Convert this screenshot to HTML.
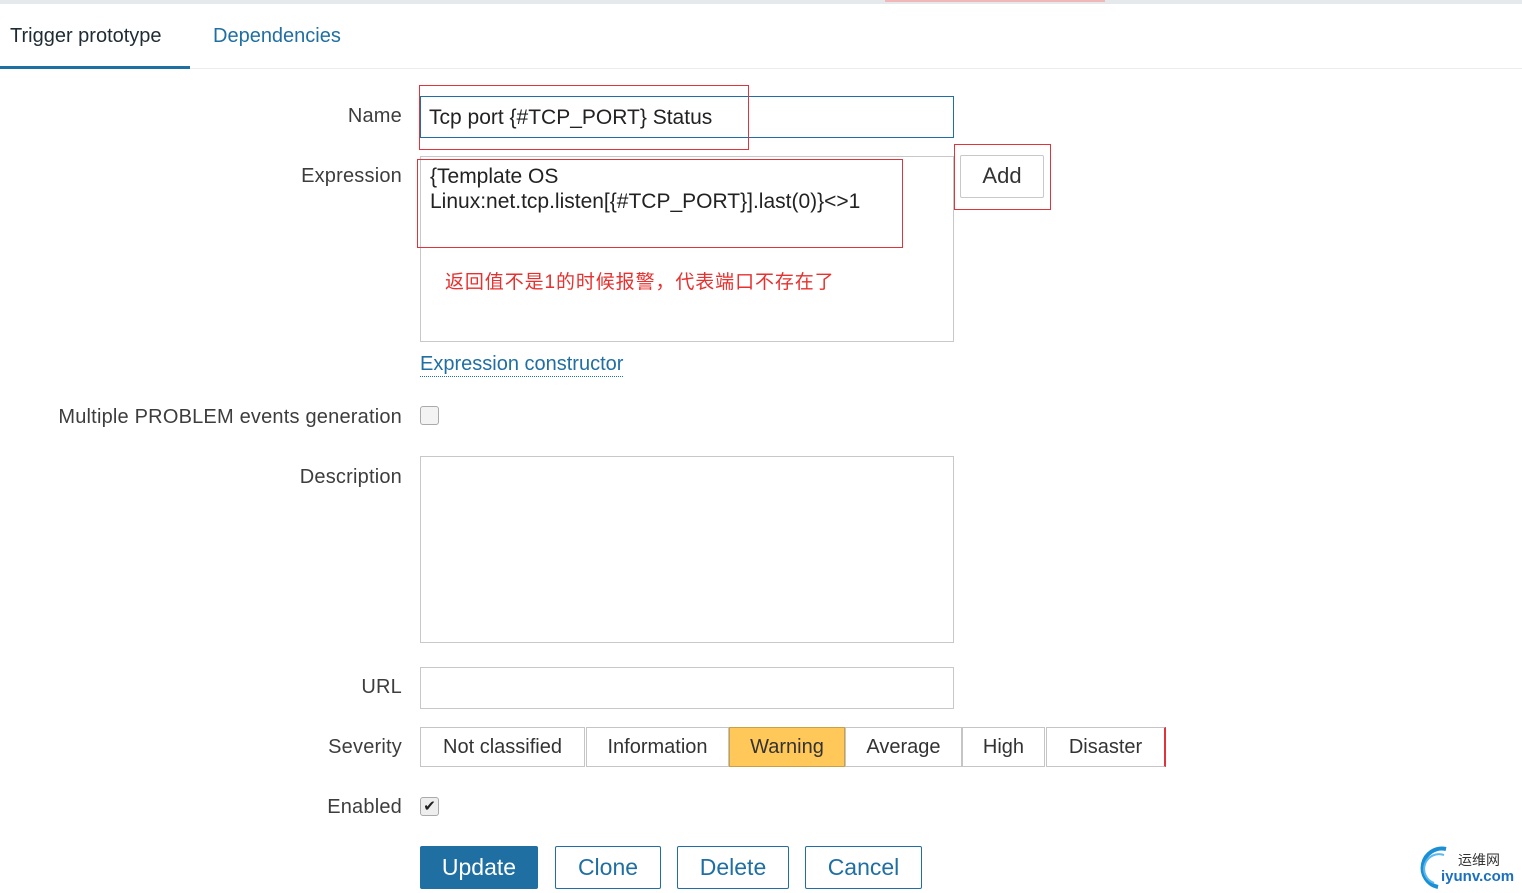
<!DOCTYPE html>
<html><head><meta charset="utf-8"><style>
body{margin:0;width:1522px;height:893px;background:#fff;position:relative;overflow:hidden;font-family:"Liberation Sans","Noto Sans CJK SC",sans-serif;color:#1f2c33;}
.a{position:absolute;}
.lbl{position:absolute;right:1120px;font-size:20px;color:#3d3d3d;white-space:nowrap;letter-spacing:0.2px}
.box{position:absolute;border:1px solid #c8c8c8;background:#fff;box-sizing:border-box;}
.red{position:absolute;border:1.5px solid #e0333a;box-sizing:border-box;}
.sev{position:absolute;top:727px;height:40px;border:1px solid #c5c5c5;box-sizing:border-box;font-size:20px;text-align:center;line-height:38px;color:#333;background:#fff;}
.btn{position:absolute;top:846px;height:43px;border:1.5px solid #1f6fa3;box-sizing:border-box;border-radius:2px;font-size:23px;color:#1f6fa3;text-align:center;line-height:40px;}
</style></head><body>
<div class="a" style="left:0;top:0;width:1522px;height:4px;background:#e6e9eb"></div>
<div class="a" style="left:885px;top:0;width:220px;height:2px;background:#f0b8b8"></div>
<div class="a" style="left:10px;top:25px;font-size:20px;color:#1f2c33">Trigger prototype</div>
<div class="a" style="left:213px;top:25px;font-size:20px;color:#1f6fa3">Dependencies</div>
<div class="a" style="left:0;top:66px;width:190px;height:3px;background:#1f6fa3"></div>
<div class="a" style="left:190px;top:68px;width:1332px;height:1px;background:#ebeef0"></div>

<div class="lbl" style="top:105px">Name</div>
<div class="box" style="left:420px;top:96px;width:534px;height:42px;border-color:#1f6fa3"></div>
<div class="a" style="left:429px;top:106px;font-size:21px;color:#222">Tcp port {#TCP_PORT} Status</div>
<div class="red" style="left:419px;top:85px;width:330px;height:65px"></div>

<div class="lbl" style="top:165px">Expression</div>
<div class="box" style="left:420px;top:156px;width:534px;height:186px"></div>
<div class="a" style="left:430px;top:164px;font-size:21px;line-height:25px;color:#222">{Template OS<br>Linux:net.tcp.listen[{#TCP_PORT}].last(0)}&lt;&gt;1</div>
<div class="red" style="left:417px;top:159px;width:486px;height:89px"></div>
<div class="a" style="left:445px;top:267px;font-size:19px;letter-spacing:0.9px;color:#e8302e">返回值不是1的时候报警，代表端口不存在了</div>
<div class="box" style="left:960px;top:155px;width:84px;height:43px;border-radius:2px;font-size:22px;text-align:center;line-height:40px;color:#333">Add</div>
<div class="red" style="left:954px;top:144px;width:97px;height:66px"></div>
<div class="a" style="left:420px;top:352px;font-size:20px;color:#1f6fa3;border-bottom:1px dotted #1f6fa3;line-height:24px">Expression constructor</div>

<div class="lbl" style="top:406px">Multiple PROBLEM events generation</div>
<div class="a" style="left:420px;top:406px;width:17px;height:17px;border:1px solid #aaa;border-radius:3px;background:#f3f3f3"></div>

<div class="lbl" style="top:466px">Description</div>
<div class="box" style="left:420px;top:456px;width:534px;height:187px"></div>

<div class="lbl" style="top:676px">URL</div>
<div class="box" style="left:420px;top:667px;width:534px;height:42px"></div>

<div class="lbl" style="top:736px">Severity</div>
<div class="sev" style="left:420px;width:165px">Not classified</div>
<div class="sev" style="left:586px;width:143px">Information</div>
<div class="sev" style="left:729px;width:116px;background:#ffc859;border-color:#c9a046">Warning</div>
<div class="sev" style="left:845px;width:117px">Average</div>
<div class="sev" style="left:962px;width:83px">High</div>
<div class="sev" style="left:1046px;width:120px;border-right:2px solid #e0333a">Disaster</div>

<div class="lbl" style="top:796px">Enabled</div>
<div class="a" style="left:420px;top:797px;width:17px;height:17px;border:1px solid #aaa;border-radius:3px;background:#eee;font-size:15px;line-height:17px;text-align:center;color:#222">✔</div>

<div class="btn" style="left:420px;width:118px;background:#1f6fa3;color:#fff">Update</div>
<div class="btn" style="left:555px;width:106px">Clone</div>
<div class="btn" style="left:677px;width:112px">Delete</div>
<div class="btn" style="left:805px;width:117px">Cancel</div>

<svg class="a" style="left:1416px;top:845px" width="40" height="44" viewBox="0 0 40 44"><path d="M30 4 A19 19 0 1 0 22 42" fill="none" stroke="#1a8fd6" stroke-width="4"/><path d="M28 10 A13 13 0 1 0 18 38" fill="none" stroke="#5cb8ee" stroke-width="2"/></svg>
<div class="a" style="left:1458px;top:850px;font-size:14px;color:#333">运维网</div>
<div class="a" style="left:1441px;top:868px;font-size:15px;font-weight:bold;color:#1a6fc0">iyunv.com</div>
</body></html>
